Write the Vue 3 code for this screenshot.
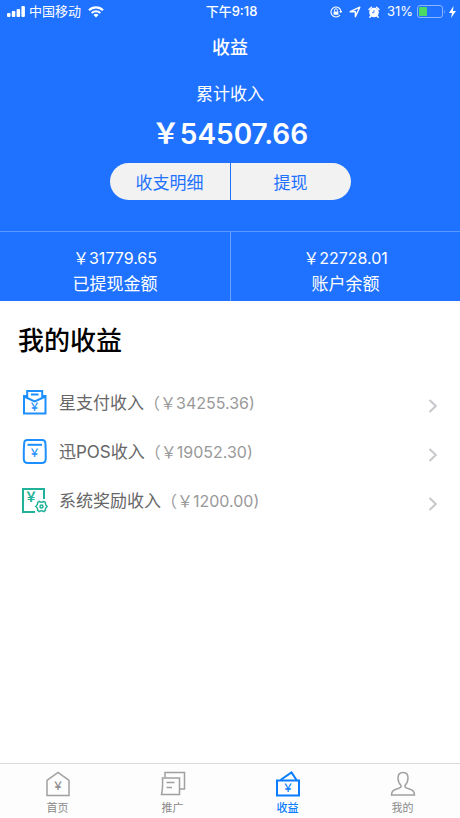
<script setup>
import { ref } from 'vue'

const incomes = [
  { icon: 'envelope', name: '星支付收入', amount: '（￥34255.36)' },
  { icon: 'pos', name: '迅POS收入', amount: '（￥19052.30)' },
  { icon: 'reward', name: '系统奖励收入', amount: '（￥1200.00)' },
]

const tabs = [
  { id: 'home', label: '首页' },
  { id: 'promote', label: '推广' },
  { id: 'income', label: '收益' },
  { id: 'mine', label: '我的' },
]
const active = ref('income')
</script>

<template>
  <div class="page">
    <header class="hero">
      <div class="status">
        <div class="status-side">
          <svg class="signal" viewBox="0 0 18 12" aria-hidden="true">
            <rect x="0" y="7" width="3.500" height="4" rx="1" />
            <rect x="4.800" y="5" width="3.500" height="6" rx="1" />
            <rect x="9.600" y="3" width="3.500" height="8" rx="1" />
            <rect x="14.400" y="0" width="3.500" height="11" rx="1" />
          </svg>
          <span class="carrier">中国移动</span>
          <svg class="wifi" viewBox="0 0 16 12" aria-hidden="true">
            <path d="M1 4.200a10 10 0 0 1 14 0M3.700 7a6.200 6.200 0 0 1 8.600 0" fill="none" stroke="currentColor" stroke-width="2.100" />
            <path d="M8 11.500L5.500 9a3.500 3.500 0 0 1 5 0z" />
          </svg>
        </div>
        <time class="clock">下午9:18</time>
        <div class="status-side status-end">
          <svg class="lock" viewBox="0 0 12 12" aria-hidden="true">
            <path d="M10 9A5 5 0 1 1 11 5.500" fill="none" stroke="currentColor" stroke-width="1.100" />
            <path d="M9.300 5h3l-1.500 2.200z" />
            <rect x="3.600" y="5.400" width="4.800" height="3.400" rx=".4" />
            <path d="M4.500 5.500V4.300a1.500 1.500 0 0 1 3 0v1.200" fill="none" stroke="currentColor" />
          </svg>
          <svg class="arrow" viewBox="0 0 12 12" aria-hidden="true">
            <path d="M1.200 5.700L10.800 1.200L6.400 10.800V5.700z" fill="none" stroke="currentColor" stroke-width="1.400" stroke-linejoin="round" />
          </svg>
          <svg class="alarm" viewBox="0 0 12 12" aria-hidden="true">
            <circle cx="6" cy="6.500" r="4.800" />
            <path d="M1 3.500L3.500 1.200M11 3.500L8.500 1.200M2.800 10l-1 1.300M9.200 10l1 1.300" stroke="currentColor" stroke-width="1.400" stroke-linecap="round" />
            <path d="M6 4v2.700H4" fill="none" stroke="#1f72ff" stroke-width=".8" />
          </svg>
          <span class="percent">31%</span>
          <svg class="battery" viewBox="0 0 29 13" aria-hidden="true">
            <rect x=".5" y=".5" width="25" height="12" rx="2.500" fill="none" stroke="#8cb7ff" />
            <rect x="2" y="2" width="8" height="9" rx="1" fill="#4cd964" />
            <path d="M27 4.500q1.500 2 0 4z" fill="#8cb7ff" />
          </svg>
          <svg class="bolt" viewBox="0 0 7 12" aria-hidden="true">
            <path d="M4.500 0L0 7h3L2 12l5-7H4z" />
          </svg>
        </div>
      </div>

      <h1 class="title">收益</h1>

      <section class="total">
        <p class="total-label">累计收入</p>
        <p class="total-amount">￥54507.66</p>
        <div class="actions">
          <button type="button">收支明细</button>
          <button type="button">提现</button>
        </div>
      </section>

      <dl class="stats">
        <div class="stat">
          <dt>已提现金额</dt>
          <dd>￥31779.65</dd>
        </div>
        <div class="stat">
          <dt>账户余额</dt>
          <dd>￥22728.01</dd>
        </div>
      </dl>
    </header>

    <main class="content">
      <h2 class="heading">我的收益</h2>
      <ul class="list">
        <li v-for="item in incomes" :key="item.icon">
          <a class="row" href="#">
            <svg v-if="item.icon === 'envelope'" class="row-icon blue" viewBox="0 0 26 26" aria-hidden="true">
              <path d="M5 7H2v17.500h21.500V7h-3" />
              <path d="M2 7.500l10.700 5 10.800-5" />
              <path d="M5.200 8.500V2h15v6.500M9 5.500h7.500" />
              <text x="12.500" y="22">￥</text>
            </svg>
            <svg v-else-if="item.icon === 'pos'" class="row-icon blue" viewBox="0 0 26 26" aria-hidden="true">
              <path d="M5.500 2h14.500q3.300 0 3.400 3.300l.3 6.700v9q0 4-4 4H5.800q-4 0-4-4v-9l.4-6.700Q2.200 2 5.500 2z" />
              <path d="M5.500 6.800h14.500" />
              <text x="12.500" y="19">￥</text>
            </svg>
            <svg v-else class="row-icon green" viewBox="0 0 26 26" aria-hidden="true">
              <path d="M22 12V2H1V25h12" />
              <text class="large" x="9" y="14">￥</text>
              <path class="thin" d="M17.200 14.500Q19.500 15.800 21.800 14.500L23.300 15.500Q23 18 25.200 19.500Q23 21 23.300 23.500L21.800 24.500Q19.500 23.200 17.200 24.500L15.700 23.500Q16 21 13.800 19.500Q16 18 15.700 15.500z" />
              <circle class="thin" cx="19.500" cy="19.500" r="1.500" />
            </svg>
            <span class="row-name">{{ item.name }}</span>
            <span class="row-amount">{{ item.amount }}</span>
            <svg class="chevron" viewBox="0 0 10 14" aria-hidden="true">
              <path d="M1.500 1l6.300 6-6.300 6" />
            </svg>
          </a>
        </li>
      </ul>
    </main>

    <nav class="tabbar">
      <button
        v-for="tab in tabs"
        :key="tab.id"
        type="button"
        class="tab"
        :class="{ active: active === tab.id }"
        @click="active = tab.id"
      >
        <svg class="tab-icon" viewBox="0 0 26 26" aria-hidden="true">
          <template v-if="tab.id === 'home'">
            <path d="M2 24.500V9.500L13 1.500l11 8V24.500z" />
            <text x="13" y="19">￥</text>
          </template>
          <template v-else-if="tab.id === 'promote'">
            <path d="M5 6.500V1.500h19.500v16.500h-5" />
            <path d="M2.500 7h17v16.500H1.500Q3 17 2.500 7zM6.500 11.500h8M6.500 16.500h5.500" />
          </template>
          <template v-else-if="tab.id === 'income'">
            <path class="heavy" d="M2 9.500h22v15H2z" />
            <path class="heavy" d="M5.500 9L16.500 1.500L21.500 9" />
            <text x="13" y="21">￥</text>
          </template>
          <template v-else>
            <path d="M13 1.500c-3.300 0-5 2-5 5.500 0 3.500 1 5.500 3 7.500v1.500q-1 1.200-5 2.200Q1.500 19.500 1.500 24h23q0-4.500-4.500-5.800-4-1-5-2.200v-1.500c2-2 3-4 3-7.500 0-3.500-1.700-5.500-5-5.500z" />
          </template>
        </svg>
        <span>{{ tab.label }}</span>
      </button>
    </nav>
  </div>
</template>

<style>
body {
  margin: 0;
  background: #fff;
}
</style>

<style scoped>
.page {
  display: flex;
  flex-direction: column;
  min-height: 100vh;
  font-family: Inter, "Noto Sans CJK SC", sans-serif;
  color: #000;
}

.hero {
  background: #1f72ff;
  color: #fff;
}

.status {
  display: grid;
  grid-template-columns: 1fr auto 1fr;
  align-items: center;
  height: 23px;
  padding: 0 4px 0 7px;
  font-size: 13px;
  line-height: 23px;
}

.status svg {
  flex: none;
  fill: currentColor;
}

.status-side {
  display: flex;
  align-items: center;
}

.status-end {
  justify-content: flex-end;
}

.signal {
  width: 18px;
  height: 12px;
  margin-right: 4px;
}

.wifi {
  width: 16px;
  height: 12px;
  margin-left: 7px;
}

.clock {
  font-weight: 500;
}

.lock,
.arrow,
.alarm {
  width: 12px;
  height: 12px;
}

.arrow,
.alarm {
  margin-left: 7px;
}

.percent {
  margin-left: 7px;
}

.battery {
  width: 29px;
  height: 13px;
  margin-left: 4px;
}

.bolt {
  width: 7px;
  height: 12px;
  margin-left: 3px;
}

.title {
  margin: 0;
  font-size: 18px;
  font-weight: 500;
  line-height: 50px;
  text-align: center;
}

.total {
  display: flex;
  flex-direction: column;
  align-items: center;
  padding: 8px 0 31px;
}

.total p {
  margin: 0;
}

.total-label {
  font-size: 17px;
  line-height: 26px;
}

.total-amount {
  padding: 7px 0 9px;
  font-size: 28px;
  font-weight: 600;
  line-height: 40px;
}

.actions {
  display: grid;
  grid-template-columns: 1fr 1fr;
  gap: 1px;
  width: 241px;
  border-radius: 19px;
  overflow: hidden;
}

.actions button {
  height: 37px;
  padding: 0;
  border: 0;
  background: #f2f2f2;
  color: #1f72ff;
  font: inherit;
  font-size: 17px;
}

.stats {
  display: grid;
  grid-template-columns: 1fr 1fr;
  margin: 0;
  border-top: 1px solid #5b99ff;
}

.stat {
  display: flex;
  flex-direction: column-reverse;
  padding: 13px 0 4px;
  font-size: 17px;
  line-height: 26px;
  text-align: center;
}

.stat + .stat {
  border-left: 1px solid #6ba3ff;
}

.stat dd {
  margin: 0;
  font-size: 16px;
}

.content {
  flex: 1;
}

.heading {
  margin: 0;
  padding: 21px 18px 17px;
  font-size: 26px;
  font-weight: 500;
  line-height: 38px;
}

.list {
  margin: 0;
  padding: 0;
  list-style: none;
}

.row {
  display: flex;
  align-items: center;
  height: 49px;
  padding: 0 22px;
  color: #666;
  font-size: 17px;
  text-decoration: none;
}

.row-icon {
  flex: none;
  width: 26px;
  height: 26px;
  margin-right: 11px;
  fill: none;
  stroke: currentColor;
  stroke-width: 2;
}

.row-icon text,
.tab-icon text {
  fill: currentColor;
  stroke: none;
  font-size: 11px;
  font-weight: 500;
  text-anchor: middle;
}

.row-icon .large {
  font-size: 13px;
  font-weight: 700;
}

.row-icon .thin {
  stroke-width: 1.5;
}

.blue {
  color: #1e8fff;
}

.green {
  color: #1fb299;
}

.row-amount {
  color: #999;
  font-size: 16px;
}

.chevron {
  width: 10px;
  height: 14px;
  margin: 8px 0 0 auto;
  fill: none;
  stroke: #c7c7cc;
  stroke-width: 2;
}

.tabbar {
  display: grid;
  grid-template-columns: repeat(4, 1fr);
  border-top: 1px solid #d9d9d9;
  background: #fdfdfd;
}

.tab {
  display: flex;
  flex-direction: column;
  align-items: center;
  gap: 3px;
  padding: 7px 0 2px;
  border: 0;
  background: none;
  color: #8a8a8a;
  font: inherit;
  font-size: 11px;
  line-height: 16px;
}

.tab.active {
  color: #0a7dff;
  font-weight: 500;
}

.tab-icon {
  width: 26px;
  height: 26px;
  fill: none;
  stroke: #a0a0a0;
  stroke-width: 1.5;
}

.tab.active .tab-icon {
  stroke: currentColor;
}

.tab-icon .heavy {
  stroke-width: 2;
}
</style>
